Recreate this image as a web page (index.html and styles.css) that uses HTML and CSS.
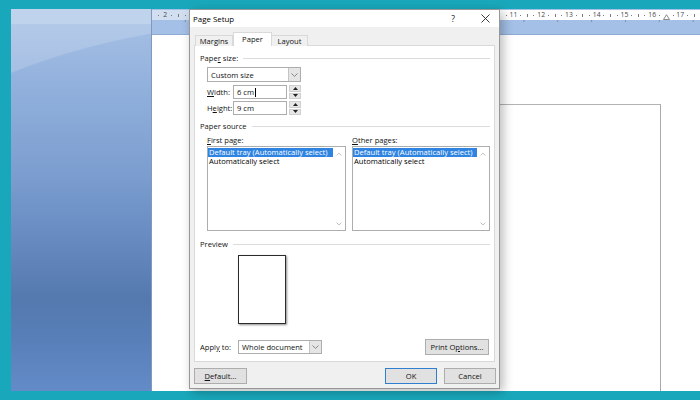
FILE: index.html
```html
<!DOCTYPE html>
<html>
<head>
<meta charset="utf-8">
<title>Page Setup</title>
<link rel="stylesheet" href="styles.css">
</head>
<body>
<div class="frame">
  <div class="app">
    <div class="sidebar"></div>
    <div class="rulerbar">
      <div class="ruler">
        <div class="ruler-track">
          <span class="cm lead"><i class="dot"></i><i class="tick"></i><i class="dot"></i></span>
          <span class="cm"><b>2</b><i class="dot"></i><i class="tick"></i><i class="dot"></i></span>
          <span class="cm"><b>1</b><i class="dot"></i><i class="tick"></i><i class="dot"></i></span>
          <span class="cm"><b></b><i class="dot"></i><i class="tick"></i><i class="dot"></i></span>
          <span class="cm"><b>1</b><i class="dot"></i><i class="tick"></i><i class="dot"></i></span>
          <span class="cm"><b>2</b><i class="dot"></i><i class="tick"></i><i class="dot"></i></span>
          <span class="cm"><b>3</b><i class="dot"></i><i class="tick"></i><i class="dot"></i></span>
          <span class="cm"><b>4</b><i class="dot"></i><i class="tick"></i><i class="dot"></i></span>
          <span class="cm"><b>5</b><i class="dot"></i><i class="tick"></i><i class="dot"></i></span>
          <span class="cm"><b>6</b><i class="dot"></i><i class="tick"></i><i class="dot"></i></span>
          <span class="cm"><b>7</b><i class="dot"></i><i class="tick"></i><i class="dot"></i></span>
          <span class="cm"><b>8</b><i class="dot"></i><i class="tick"></i><i class="dot"></i></span>
          <span class="cm"><b>9</b><i class="dot"></i><i class="tick"></i><i class="dot"></i></span>
          <span class="cm"><b>10</b><i class="dot"></i><i class="tick"></i><i class="dot"></i></span>
          <span class="cm"><b>11</b><i class="dot"></i><i class="tick"></i><i class="dot"></i></span>
          <span class="cm"><b>12</b><i class="dot"></i><i class="tick"></i><i class="dot"></i></span>
          <span class="cm"><b>13</b><i class="dot"></i><i class="tick"></i><i class="dot"></i></span>
          <span class="cm"><b>14</b><i class="dot"></i><i class="tick"></i><i class="dot"></i></span>
          <span class="cm"><b>15</b><i class="dot"></i><i class="tick"></i><i class="dot"></i></span>
          <span class="cm"><b>16</b><i class="dot"></i><i class="indent"><svg width="7" height="6" viewBox="0 0 7 6"><path d="M0.5 5.5L3.5 0.7L6.5 5.5Z" fill="#fff" stroke="#6d6d6d" stroke-width="0.8"/></svg></i><i class="dot"></i></span>
          <span class="cm"><b>17</b><i class="dot"></i><i class="tick"></i></span>
        </div>
      </div>
      <div class="tabstops"></div>
    </div>
    <div class="page">
      <div class="guide"></div>
    </div>

    <div class="dialog">
      <div class="titlebar">
        <span class="title">Page Setup</span>
        <span class="help">?</span>
        <span class="close"><svg width="9" height="9" viewBox="0 0 9 9"><path d="M0.5 0.5L8.5 8.5M8.5 0.5L0.5 8.5" stroke="#222" stroke-width="0.9"/></svg></span>
      </div>
      <div class="tabs">
        <span class="tab">Margins</span>
        <span class="tab active">Paper</span>
        <span class="tab">Layout</span>
      </div>
      <div class="panel">
        <div class="group"><span>Pape<u>r</u> size:</span><span class="rule"></span></div>
        <div class="combo wide">
          <span class="combo-text">Custom size</span>
          <span class="combo-btn"><svg width="7" height="4" viewBox="0 0 7 4"><path d="M0.5 0.5L3.5 3.4L6.5 0.5" fill="none" stroke="#707070" stroke-width="0.8"/></svg></span>
        </div>
        <div class="field first">
          <span class="field-label"><u>W</u>idth:</span>
          <span class="input">6 cm<span class="caret"></span></span>
          <span class="spin">
            <span class="spin-btn"><svg width="5" height="3" viewBox="0 0 5 3"><path d="M0 3L2.5 0L5 3Z" fill="#222"/></svg></span>
            <span class="spin-btn"><svg width="5" height="3" viewBox="0 0 5 3"><path d="M0 0L2.5 3L5 0Z" fill="#222"/></svg></span>
          </span>
        </div>
        <div class="field second">
          <span class="field-label">H<u>e</u>ight:</span>
          <span class="input">9 cm</span>
          <span class="spin">
            <span class="spin-btn"><svg width="5" height="3" viewBox="0 0 5 3"><path d="M0 3L2.5 0L5 3Z" fill="#222"/></svg></span>
            <span class="spin-btn"><svg width="5" height="3" viewBox="0 0 5 3"><path d="M0 0L2.5 3L5 0Z" fill="#222"/></svg></span>
          </span>
        </div>
        <div class="group source"><span>Paper source</span><span class="rule"></span></div>
        <div class="lists-head">
          <span class="list-label"><u>F</u>irst page:</span>
          <span class="list-label"><u>O</u>ther pages:</span>
        </div>
        <div class="lists">
          <div class="listbox">
            <div class="items">
              <div class="item selected">Default tray (Automatically select)</div>
              <div class="item">Automatically select</div>
            </div>
            <div class="scroll">
              <svg width="6" height="4" viewBox="0 0 6 4"><path d="M0.5 3.5L3 1L5.5 3.5" fill="none" stroke="#bdbdbd" stroke-width="0.9"/></svg>
              <svg width="6" height="4" viewBox="0 0 6 4"><path d="M0.5 0.5L3 3L5.5 0.5" fill="none" stroke="#bdbdbd" stroke-width="0.9"/></svg>
            </div>
          </div>
          <div class="listbox">
            <div class="items">
              <div class="item selected">Default tray (Automatically select)</div>
              <div class="item">Automatically select</div>
            </div>
            <div class="scroll">
              <svg width="6" height="4" viewBox="0 0 6 4"><path d="M0.5 3.5L3 1L5.5 3.5" fill="none" stroke="#bdbdbd" stroke-width="0.9"/></svg>
              <svg width="6" height="4" viewBox="0 0 6 4"><path d="M0.5 0.5L3 3L5.5 0.5" fill="none" stroke="#bdbdbd" stroke-width="0.9"/></svg>
            </div>
          </div>
        </div>
        <div class="group preview-head"><span>Preview</span><span class="rule"></span></div>
        <div class="preview-page"></div>
        <div class="apply">
          <span class="apply-label">Appl<u>y</u> to:</span>
          <div class="combo apply-combo">
            <span class="combo-text">Whole document</span>
            <span class="combo-btn"><svg width="7" height="4" viewBox="0 0 7 4"><path d="M0.5 0.5L3.5 3.4L6.5 0.5" fill="none" stroke="#707070" stroke-width="0.8"/></svg></span>
          </div>
          <span class="btn print">Print O<u>p</u>tions...</span>
        </div>
      </div>
      <div class="buttons">
        <span class="btn default"><u>D</u>efault...</span>
        <span class="btn ok">OK</span>
        <span class="btn cancel">Cancel</span>
      </div>
    </div>
  </div>
</div>
</body>
</html>
```

FILE: styles.css
```css
* { box-sizing: border-box; }
html, body { margin: 0; padding: 0; }
body {
  width: 700px;
  height: 400px;
  overflow: hidden;
  font-family: "Open Sans", "Noto Sans", sans-serif;
}
.frame {
  width: 700px;
  height: 400px;
  background: #19a8bb;
  padding: 9px 13px 9px 11px;
}
.app {
  position: relative;
  height: 382px;
  display: grid;
  grid-template-columns: 141px 1fr;
  grid-template-rows: 26px 1fr;
}
.sidebar {
  grid-row: 1 / 3;
  grid-column: 1;
  border-right: 1px solid #8399bb;
  background:
    radial-gradient(ellipse 487px 250px at 300px 260px, rgba(255,255,255,0) 99.5%, rgba(255,255,255,0.16) 100%),
    linear-gradient(to bottom, #b4cbea 0, #b4cbea 15px, #a5bfe4 15px, #93b2dd 70px, #7d9fd0 160px, #6a8ec4 220px, #5479af 290px, #587fb8 330px, #638bc7 382px);
}
.rulerbar {
  grid-row: 1;
  grid-column: 2;
  background: #a4c0e7;
  border-bottom: 1px solid #8eabd6;
  padding-top: 1px;
}
.ruler {
  height: 10px;
  overflow: hidden;
  background: linear-gradient(to right, #d2dff1 0, #d2dff1 66px, #ffffff 66px);
}
.ruler-track {
  display: flex;
  height: 10px;
  margin-left: -10.13px;
}
.cm {
  display: flex;
  flex: 0 0 26.67px;
  height: 10px;
}
.cm.lead { flex: 0 0 20px; }
.cm > b, .cm > i {
  flex: 0 0 6.667px;
  display: flex;
  align-items: center;
  justify-content: center;
  font-weight: normal;
  font-style: normal;
  font-size: 6.8px;
  line-height: 10px;
  color: #4a4a4a;
  font-family: "Open Sans", sans-serif;
}
.dot::after {
  content: "";
  width: 1px;
  height: 1px;
  background: #7a7a7a;
}
.tick::after {
  content: "";
  width: 1px;
  height: 3px;
  background: #7a7a7a;
}
.indent svg { display: block; margin-top: 3px; }
.tabstops {
  height: 3px;
  background: linear-gradient(to right, #7f8fa8 1px, transparent 1px) 32.8px 0 / 33.87px 2px repeat-x;
}
.page {
  grid-row: 2;
  grid-column: 2;
  background: #fff;
  overflow: hidden;
}
.guide {
  margin: 69px 0 0 66.7px;
  width: 442px;
  height: 400px;
  border-top: 1px solid #b3b3b3;
  border-right: 1px solid #a9a9a9;
}

/* dialog */
.dialog {
  position: absolute;
  left: 178px;
  top: 0;
  width: 311px;
  height: 380px;
  background: #f0f0f0;
  border: 1px solid #979797;
  box-shadow: 3px 3px 10px rgba(0,0,0,0.28);
  display: flex;
  flex-direction: column;
  font-size: 7.6px;
  color: #111;
}
.titlebar {
  height: 17px;
  background: #fff;
  display: flex;
  align-items: center;
  padding-left: 3px;
}
.title { flex: 1; font-size: 7.9px; color: #000; }
.help { width: 14px; text-align: center; font-size: 8.6px; margin-right: 15px; }
.close { width: 20px; display: flex; justify-content: center; margin-right: 4px; }
.close svg { display: block; }
.tabs {
  height: 18px;
  display: flex;
  align-items: flex-end;
  padding-left: 5px;
  position: relative;
  z-index: 1;
}
.tab {
  height: 11px;
  display: flex;
  align-items: center;
  justify-content: center;
  border: 1px solid #d9d9d9;
  border-bottom: none;
  margin-bottom: -1px;
  background: #f0f0f0;
  width: 38px;
}
.tab + .tab { border-left: none; }
.tab.active {
  height: 14px;
  width: 39px;
  background: #fff;
  border-left: 1px solid #d9d9d9;
  padding-bottom: 2px;
}
.tab.active + .tab { border-left: none; width: 36px; }
.panel {
  margin: 0 4px;
  height: 317px;
  background: #fff;
  border: 1px solid #d9d9d9;
  display: flex;
  flex-direction: column;
}
.group {
  height: 12px;
  margin-top: 6px;
  padding: 0 4px 0 5px;
  display: flex;
  align-items: center;
  gap: 5px;
}
.rule { flex: 1; height: 1px; background: #dcdcdc; }
.combo {
  height: 15px;
  border: 1px solid #adadad;
  background: #fff;
  display: flex;
  align-items: center;
}
.combo.wide { margin: 3px 0 0 12px; width: 94px; }
.combo-text { flex: 1; padding-left: 3px; }
.combo-btn {
  width: 12px;
  height: 100%;
  background: #e5e5e5;
  border-left: 1px solid #c4c4c4;
  display: flex;
  align-items: center;
  justify-content: center;
}
.combo-btn svg { display: block; }
.field {
  height: 14px;
  margin-left: 12px;
  display: flex;
  align-items: center;
}
.field.first { margin-top: 3px; }
.field.second { margin-top: 2px; }
.field-label { width: 26px; }
.input {
  width: 54px;
  height: 14px;
  border: 1px solid #adadad;
  display: flex;
  align-items: center;
  padding-left: 3px;
}
.caret { width: 1px; height: 9px; background: #000; margin-left: 1px; }
.spin {
  width: 12px;
  height: 14px;
  margin-left: 2px;
  display: flex;
  flex-direction: column;
  gap: 1px;
}
.spin-btn {
  flex: 1;
  background: #e6e6e6;
  border: 1px solid #cfcfcf;
  display: flex;
  align-items: center;
  justify-content: center;
}
.spin-btn svg { display: block; }
.group.source { margin-top: 5px; }
.lists-head {
  height: 10px;
  margin: 3px 0 0 12px;
  display: flex;
  gap: 6px;
  align-items: center;
}
.list-label { width: 139px; }
.list-label + .list-label { width: 138px; }
.lists {
  height: 85px;
  margin: 1px 0 0 12px;
  display: flex;
  gap: 6px;
}
.listbox {
  width: 139px;
  border: 1px solid #adadad;
  display: flex;
}
.listbox + .listbox { width: 138px; }
.items { flex: 1; padding-top: 1px; color: #000; }
.item { height: 9.2px; line-height: 9.2px; padding-left: 1px; white-space: nowrap; }
.item.selected { background: #2f84e2; color: #fff; }
.scroll {
  width: 12px;
  display: flex;
  flex-direction: column;
  justify-content: space-between;
  align-items: center;
  padding: 5px 0 4px;
}
.scroll svg { display: block; }
.group.preview-head { margin-top: 7px; }
.preview-page {
  margin: 5px 0 0 43px;
  width: 48px;
  height: 69px;
  border: 1px solid #2b2b2b;
  background: #fff;
  box-shadow: 1px 1px 2px rgba(0,0,0,0.45);
}
.apply {
  height: 16px;
  margin-top: 15px;
  padding: 0 5px;
  display: flex;
  align-items: center;
}
.apply-label { width: 38px; }
.combo.apply-combo { width: 84px; height: 14px; }
.btn {
  height: 16px;
  background: #e1e1e1;
  border: 1px solid #adadad;
  display: flex;
  align-items: center;
  justify-content: center;
}
.btn.print { margin-left: auto; width: 64px; }
.buttons {
  margin-top: 6px;
  height: 16px;
  padding: 0 3px 0 4px;
  display: flex;
}
.btn.default { width: 53px; }
.btn.ok { margin-left: auto; width: 52px; border-color: #2f7fd0; }
.btn.cancel { margin-left: 7px; width: 52px; }
```
